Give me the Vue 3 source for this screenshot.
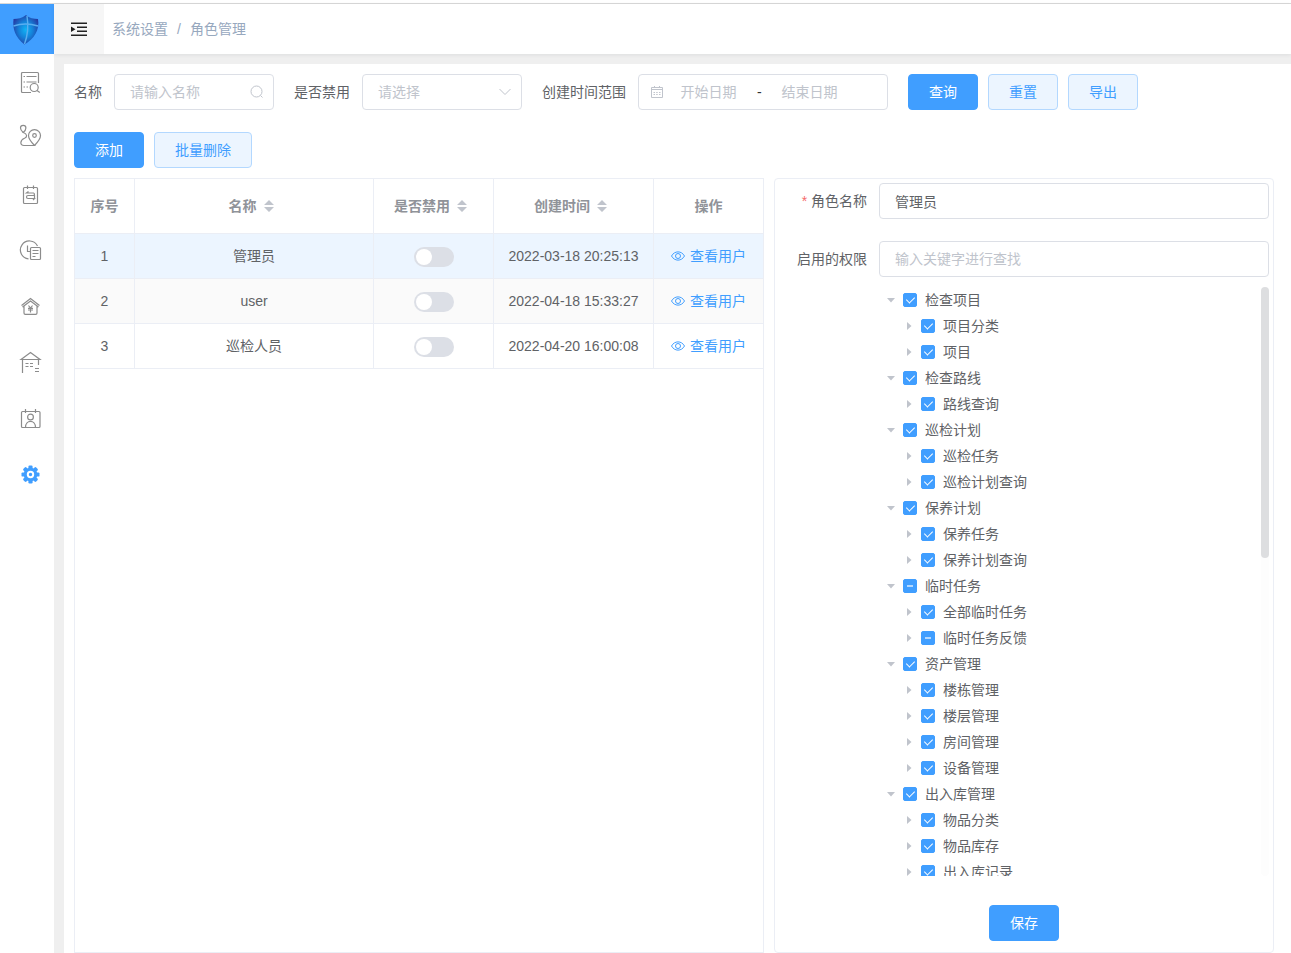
<script setup>
import { ref } from 'vue'

const name = ref('')
const disabled = ref('')
const startDate = ref('')
const endDate = ref('')
const roleName = ref('管理员')
const keyword = ref('')

const columns = [
  { key: 'name', label: '名称' },
  { key: 'disabled', label: '是否禁用' },
  { key: 'created', label: '创建时间' },
]

const roles = ref([
  { id: 1, name: '管理员', disabled: false, created: '2022-03-18 20:25:13' },
  { id: 2, name: 'user', disabled: false, created: '2022-04-18 15:33:27' },
  { id: 3, name: '巡检人员', disabled: false, created: '2022-04-20 16:00:08' },
])
const currentId = ref(1)

const tree = [
  { label: '检查项目', children: [{ label: '项目分类' }, { label: '项目' }] },
  { label: '检查路线', children: [{ label: '路线查询' }] },
  { label: '巡检计划', children: [{ label: '巡检任务' }, { label: '巡检计划查询' }] },
  { label: '保养计划', children: [{ label: '保养任务' }, { label: '保养计划查询' }] },
  { label: '临时任务', partial: true, children: [{ label: '全部临时任务' }, { label: '临时任务反馈', partial: true }] },
  { label: '资产管理', children: [{ label: '楼栋管理' }, { label: '楼层管理' }, { label: '房间管理' }, { label: '设备管理' }] },
  { label: '出入库管理', children: [{ label: '物品分类' }, { label: '物品库存' }, { label: '出入库记录' }] },
]
</script>

<template>
  <div class="shell">
    <aside class="side">
      <a class="logo" href="#" aria-label="首页">
        <svg width="28" height="32" viewBox="0 0 28 32">
          <defs>
            <radialGradient id="shield" cx="50%" cy="50%" r="56%">
              <stop offset="0" stop-color="#10b4f5" />
              <stop offset="0.5" stop-color="#1580d8" />
              <stop offset="1" stop-color="#243ca4" />
            </radialGradient>
          </defs>
          <path d="M14 2C10 5 6 6 1.500 6C0.500 16 3 24 12.500 31.500C22 26 28 17 26 6C22 6 17 5 14 2Z" fill="url(#shield)" />
          <path d="M1.500 13C9 10.500 18 10.500 26 13M15 3C16.500 12 15.500 23 12.500 31" fill="none" stroke="#5aaef0" stroke-width="1.400" />
        </svg>
      </a>
      <nav class="menu">
        <a href="#" aria-label="检查项目">
          <svg viewBox="0 0 24 24"><path d="M12 22.500H3.500a1 1 0 0 1-1-1V3.500a1 1 0 0 1 1-1h15a1 1 0 0 1 1 1V13M4.500 6.500h1.500M7.500 6.500h10M4.500 12h1.500M7.500 12h10M4.500 17h1.500M7.500 17h1.500M18 20.500l2.800 2" /><circle cx="15.200" cy="17.500" r="4" /></svg>
        </a>
        <a href="#" aria-label="检查路线">
          <svg viewBox="0 0 24 24"><path d="M4.200 6.500C2.500 5 1.500 3.500 1.500 2a2.700 2.700 0 0 1 5.400 0C6.900 3.500 6 5 4.200 6.500C8.500 8 8.500 11 5.500 12.300C1 14 .5 19.500 5 19.500H15.500C12 16 9.500 13 9.500 9.600a6 6 0 0 1 12 0C21.500 13 19 16 15.500 19.500" /><circle cx="15.500" cy="9.500" r="1.800" /></svg>
        </a>
        <a href="#" aria-label="巡检计划">
          <svg viewBox="0 0 24 24"><rect x="4.500" y="5.500" width="14" height="16" rx="1" /><path d="M8.500 3.500v3.500M14.500 3.500v3.500M9.500 9.500l-2 1.500h7a1.300 1.300 0 0 1 0 2.500H9a1.300 1.300 0 0 0 0 3h6.500l-1.500 1.500M10 13.500h5.500v3" /></svg>
        </a>
        <a href="#" aria-label="保养计划">
          <svg viewBox="0 0 24 24"><path d="M18.500 8A9 9 0 1 0 9.500 20.900M8.500 7.500v6h3" /><rect x="11.500" y="9.500" width="10" height="12" rx="1" /><path d="M13.500 12.500h6M13.500 15.500h6M13.500 18.500h3" /></svg>
        </a>
        <a href="#" aria-label="临时任务">
          <svg viewBox="0 0 24 24"><path d="M2.500 11.500L11.500 4.500L20.500 11.500M3.500 13L11.500 7L19.500 13M5 12v7a1.300 1.300 0 0 0 1.300 1.300h10.400a1.300 1.300 0 0 0 1.300-1.300v-7M9.500 11.500l2 2.500 2-2.500M9 14.300h5M9 16h5M11.500 14v4.500" /></svg>
        </a>
        <a href="#" aria-label="资产管理">
          <svg viewBox="0 0 24 24"><path d="M2 9.500L11.500 2.500L21 9.500ZM3.500 9.500v13.500M19.500 9.500v5.500M6.500 13.500h3M11 13.500h3M6.500 16.500h3M11 16.500h3M16 18.500h4M16 21.500h4" /></svg>
        </a>
        <a href="#" aria-label="出入库管理">
          <svg viewBox="0 0 24 24"><rect x="2.500" y="5.500" width="18.500" height="16" rx="1" /><path d="M6.500 3v4M16.500 3v4M6.500 21.500C6.500 13.300 16.500 13.300 16.500 21.500" /><circle cx="11.500" cy="11" r="2.900" /></svg>
        </a>
        <a href="#" aria-label="系统设置">
          <svg class="gear" viewBox="0 0 24 24">
            <circle cx="11.500" cy="12.500" r="6.800" />
            <g><rect v-for="n in 4" :key="n" x="9.400" y="3.500" width="4.200" height="18" rx="1.200" :transform="`rotate(${n * 45} 11.500 12.500)`" /></g>
            <circle class="ring" cx="11.500" cy="12.500" r="2.700" />
          </svg>
        </a>
      </nav>
    </aside>

    <div class="body">
      <header class="top">
        <button class="fold" type="button" aria-label="收起菜单">
          <svg width="16" height="16" viewBox="0 0 16 16"><path d="M0 1.500h16v1.500H0zM6 5.500h10v1.500H6zM6 9.500h10v1.500H6zM0 13.500h16v1.500H0zM0 5.500l4.500 2.800-4.500 2.800z" fill="#222" /></svg>
        </button>
        <nav class="crumbs">
          <a href="#">系统设置</a><span class="slash">/</span><span>角色管理</span>
        </nav>
      </header>

      <main class="page">
        <form class="filters" @submit.prevent>
          <div class="field">
            <label for="f-name">名称</label>
            <div class="control">
              <input id="f-name" v-model="name" type="text" placeholder="请输入名称">
              <svg class="tail" width="14" height="14" viewBox="0 0 14 14"><circle cx="6.500" cy="6.500" r="5.500" /><path d="M10.500 10.500l2 2" /></svg>
            </div>
          </div>
          <div class="field">
            <label for="f-disabled">是否禁用</label>
            <div class="control">
              <select id="f-disabled" v-model="disabled" :class="{ empty: !disabled }">
                <option value="">请选择</option>
                <option value="1">是</option>
                <option value="0">否</option>
              </select>
              <svg class="tail" width="14" height="14" viewBox="0 0 14 14"><path d="M1.500 4L7 9.500L12.500 4" /></svg>
            </div>
          </div>
          <div class="field">
            <label for="f-start">创建时间范围</label>
            <div class="range">
              <svg width="14" height="14" viewBox="0 0 14 14"><path d="M1.500 2.500h11v10h-11zM1.500 4.500h11M4.500 1v2M9.500 1v2M3.500 7.500h1.500M6.200 7.500h1.500M9 7.500h1.500M3.500 9.500h1.500M6.200 9.500h1.500M9 9.500h1.500" /></svg>
              <input id="f-start" v-model="startDate" type="text" placeholder="开始日期">
              <span>-</span>
              <input v-model="endDate" type="text" placeholder="结束日期" aria-label="结束日期">
            </div>
          </div>
          <div class="actions">
            <button class="btn primary" type="submit">查询</button>
            <button class="btn plain" type="reset">重置</button>
            <button class="btn plain" type="button">导出</button>
          </div>
        </form>

        <div class="actions toolbar">
          <button class="btn primary" type="button">添加</button>
          <button class="btn plain" type="button">批量删除</button>
        </div>

        <div class="split">
          <section class="table-box">
            <table>
              <colgroup>
                <col class="w-index"><col><col class="w-switch"><col class="w-time"><col class="w-op">
              </colgroup>
              <thead>
                <tr>
                  <th>序号</th>
                  <th v-for="c in columns" :key="c.key">
                    <span class="sortable">{{ c.label }}
                      <svg width="10" height="12" viewBox="0 0 10 12"><path d="M0 5L5 0l5 5zM0 7l5 5 5-5z" fill="#c0c4cc" /></svg>
                    </span>
                  </th>
                  <th>操作</th>
                </tr>
              </thead>
              <tbody>
                <tr v-for="r in roles" :key="r.id" :class="{ current: r.id === currentId }" @click="currentId = r.id">
                  <td>{{ r.id }}</td>
                  <td>{{ r.name }}</td>
                  <td><input v-model="r.disabled" class="switch" type="checkbox" role="switch" :aria-label="`禁用${r.name}`"></td>
                  <td>{{ r.created }}</td>
                  <td>
                    <button class="view" type="button">
                      <svg width="14" height="14" viewBox="0 0 14 14"><path d="M.5 7C3.500 1.500 10.500 1.500 13.500 7C10.500 12.500 3.500 12.500.5 7Z" /><circle cx="7" cy="7" r="2.500" /></svg>
                      <span>查看用户</span>
                    </button>
                  </td>
                </tr>
              </tbody>
            </table>
          </section>

          <form class="detail" @submit.prevent>
            <div class="row">
              <label for="r-name"><i>*</i> 角色名称</label>
              <input id="r-name" v-model="roleName" type="text">
            </div>
            <div class="row">
              <label for="r-key">启用的权限</label>
              <input id="r-key" v-model="keyword" type="text" placeholder="输入关键字进行查找">
            </div>
            <div class="tree">
              <ul>
                <li v-for="g in tree" :key="g.label">
                  <div class="node">
                    <button class="caret" type="button" :aria-label="`收起${g.label}`"><svg width="8" height="6" viewBox="0 0 8 6"><path d="M0 1h8L4 5.500z" /></svg></button>
                    <label><input type="checkbox" :checked="!g.partial" :indeterminate.prop="!!g.partial">{{ g.label }}</label>
                  </div>
                  <ul>
                    <li v-for="c in g.children" :key="c.label" class="node">
                      <button class="caret" type="button" :aria-label="`展开${c.label}`"><svg width="6" height="8" viewBox="0 0 6 8"><path d="M1 0v8l4.500-4z" /></svg></button>
                      <label><input type="checkbox" :checked="!c.partial" :indeterminate.prop="!!c.partial">{{ c.label }}</label>
                    </li>
                  </ul>
                </li>
              </ul>
              <div class="bar"><div class="thumb"></div></div>
            </div>
            <button class="btn primary save" type="submit">保存</button>
          </form>
        </div>
      </main>
    </div>
  </div>
</template>

<style>
body {
  margin: 0;
  background: #fff;
}
</style>

<style scoped>
* {
  box-sizing: border-box;
}
.shell {
  display: flex;
  height: 100vh;
  padding-top: 3px;
  overflow: hidden;
  color: #606266;
  font: 14px/20px "Liberation Sans", "Noto Sans CJK SC", sans-serif;
}
input, select, button {
  margin: 0;
  font: inherit;
  color: inherit;
}
a {
  color: inherit;
  text-decoration: none;
}
ul {
  margin: 0;
  padding: 0;
  list-style: none;
}
.side {
  flex: none;
  width: 54px;
  border-top: 1px solid #d9d9d9;
}
.logo {
  display: flex;
  align-items: center;
  height: 50px;
  padding-left: 12px;
  background: #409eff;
}
.menu a {
  display: flex;
  align-items: center;
  height: 56px;
  padding-left: 19px;
}
.menu svg {
  width: 24px;
  height: 24px;
  overflow: visible;
  fill: none;
  stroke: #8c8c8c;
  stroke-width: 1.2;
}
.menu .gear {
  fill: #409eff;
  stroke: none;
}
.gear .ring {
  stroke: #fff;
  stroke-width: 2;
}
.body {
  flex: 1;
  min-width: 0;
  display: flex;
  flex-direction: column;
  border-top: 1px solid #d9d9d9;
  background: #efefef;
}
.top {
  flex: none;
  display: flex;
  align-items: center;
  height: 50px;
  background: #fff;
  box-shadow: 0 1px 4px rgba(0, 21, 41, 0.08);
}
.fold {
  display: flex;
  align-items: center;
  justify-content: center;
  width: 50px;
  height: 50px;
  padding: 0;
  border: 0;
  background: #f6f6f6;
}
.crumbs {
  padding-left: 8px;
  color: #97a8be;
}
.slash {
  margin: 0 9px;
}
.page {
  flex: 1;
  min-height: 0;
  display: flex;
  flex-direction: column;
  margin: 10px 0 0 10px;
  padding: 10px 17px 0 10px;
  background: #fff;
}
.filters {
  display: flex;
  gap: 20px;
}
.field {
  display: flex;
  align-items: center;
  gap: 12px;
  white-space: nowrap;
}
.control {
  position: relative;
  width: 160px;
}
.control input, .control select, .row input {
  display: block;
  width: 100%;
  height: 36px;
  padding: 0 15px;
  border: 1px solid #dcdfe6;
  border-radius: 4px;
  outline: 0;
  background: #fff;
  appearance: none;
}
::placeholder {
  color: #c0c4cc;
  opacity: 1;
}
.control .empty {
  color: #c0c4cc;
}
.tail {
  position: absolute;
  right: 10px;
  top: 11px;
  pointer-events: none;
}
.tail, .range svg {
  fill: none;
  stroke: #c0c4cc;
}
.range {
  display: flex;
  align-items: center;
  width: 250px;
  height: 36px;
  padding: 0 29px 0 11px;
  border: 1px solid #dcdfe6;
  border-radius: 4px;
}
.range svg {
  flex: none;
}
.range input {
  flex: 1;
  width: 0;
  padding: 0;
  border: 0;
  outline: 0;
  background: none;
  text-align: center;
}
.range input:first-of-type {
  margin-left: -4px;
}
.range span {
  width: 4px;
  color: #303133;
}
.actions {
  display: flex;
  gap: 10px;
}
.toolbar {
  margin: 22px 0 10px;
}
.btn {
  height: 36px;
  padding: 0 20px;
  border: 1px solid #409eff;
  border-radius: 4px;
  white-space: nowrap;
}
.primary {
  background: #409eff;
  color: #fff;
}
.plain {
  border-color: #b3d8ff;
  background: #ecf5ff;
  color: #409eff;
}
.split {
  flex: 1;
  min-height: 0;
  display: grid;
  grid-template-columns: minmax(0, 69fr) minmax(0, 50fr);
  gap: 10px;
}
.table-box {
  border: 1px solid #ebeef5;
  overflow: hidden;
}
table {
  width: 100%;
  table-layout: fixed;
  border-collapse: separate;
  border-spacing: 0;
}
.w-index {
  width: 60px;
}
.w-switch {
  width: 120px;
}
.w-time {
  width: 160px;
}
.w-op {
  width: 109px;
}
th, td {
  padding: 0;
  border-right: 1px solid #ebeef5;
  border-bottom: 1px solid #ebeef5;
  text-align: center;
}
th:last-child, td:last-child {
  border-right: 0;
}
th {
  height: 55px;
  color: #909399;
  font-weight: bold;
}
td {
  height: 45px;
  padding-bottom: 1px;
}
tbody tr:nth-child(even) {
  background: #fafafa;
}
tbody .current {
  background: #ecf5ff;
}
.sortable {
  display: inline-flex;
  align-items: center;
  gap: 7px;
  padding-right: 6px;
}
.switch {
  display: block;
  width: 40px;
  height: 20px;
  margin: 3px auto 0;
  padding: 2px;
  border-radius: 10px;
  background: #dcdfe6;
  appearance: none;
}
.switch::after {
  content: "";
  display: block;
  width: 16px;
  height: 16px;
  border-radius: 50%;
  background: #fff;
}
.switch:checked {
  background: #409eff;
}
.switch:checked::after {
  margin-left: auto;
}
.view {
  display: flex;
  align-items: center;
  gap: 5px;
  margin: 1px auto 0;
  padding: 0;
  border: 0;
  background: none;
  color: #409eff;
}
.view svg {
  fill: none;
  stroke: #409eff;
}
.detail {
  min-height: 0;
  display: flex;
  flex-direction: column;
  padding: 4px 4px 11px;
  border: 1px solid #ebeef5;
  border-radius: 4px;
}
.row {
  display: flex;
  align-items: center;
  margin-bottom: 22px;
}
.row + .row {
  margin-bottom: 10px;
}
.row label {
  flex: none;
  width: 100px;
  padding-right: 12px;
  text-align: right;
}
.row i {
  color: #f56c6c;
  font-style: normal;
}
.row input {
  flex: 1;
  min-width: 0;
}
.tree {
  position: relative;
  flex: 1;
  min-height: 0;
  margin-left: 100px;
  overflow: hidden;
}
.tree ul ul {
  padding-left: 18px;
}
.node {
  display: flex;
  align-items: center;
  height: 26px;
}
.caret {
  display: flex;
  align-items: center;
  justify-content: center;
  width: 24px;
  height: 24px;
  padding: 0;
  border: 0;
  background: none;
}
.caret svg {
  fill: #c0c4cc;
}
.node label {
  display: flex;
  align-items: center;
  gap: 8px;
}
.node input {
  position: relative;
  width: 14px;
  height: 14px;
  border: 1px solid #409eff;
  border-radius: 2px;
  background: #409eff;
  appearance: none;
}
.node input:not(:checked):not(:indeterminate) {
  border-color: #dcdfe6;
  background: #fff;
}
.node input:checked::after {
  content: "";
  position: absolute;
  left: 4px;
  top: 1px;
  width: 4px;
  height: 7px;
  border: solid #fff;
  border-width: 0 1px 1px 0;
  transform: rotate(45deg);
}
.node input:indeterminate::after {
  content: "";
  position: absolute;
  left: 3px;
  top: 5px;
  width: 6px;
  height: 2px;
  background: #b3d8ff;
}
.bar {
  position: absolute;
  top: 0;
  right: 0;
  bottom: 0;
  width: 8px;
  border-radius: 4px;
  background: #fdfdfd;
}
.thumb {
  height: 46%;
  border-radius: 4px;
  background: #dddee0;
}
.save {
  align-self: center;
  flex: none;
  margin-top: 29px;
}
</style>
